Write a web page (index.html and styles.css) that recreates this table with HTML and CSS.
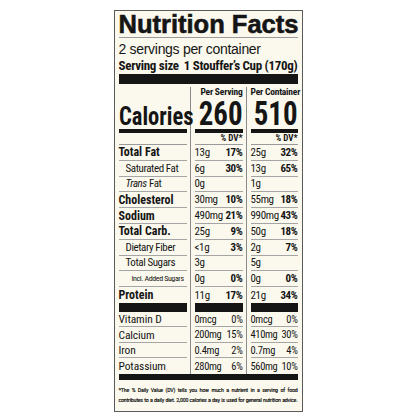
FILE: index.html
```html
<!DOCTYPE html>
<html lang="en">
<head>
<meta charset="utf-8">
<title>Nutrition Facts</title>
<link rel="stylesheet" href="styles.css">
</head>
<body>
<div class="label">
  <h1 class="title">Nutrition Facts</h1>
  <p class="servings">2 servings per container</p>
  <p class="size"><span>Serving size</span><span>1 Stouffer’s Cup (170g)</span></p>
  <div class="bar bar-top"></div>
  <div class="table">
    <div class="col col-labels">
      <div class="head"></div>
      <div class="cal"><span class="cal-label">Calories</span></div>
      <div class="dv"></div>
      <div class="row b">Total Fat</div>
      <div class="row ind">Saturated Fat</div>
      <div class="row ind"><span><i>Trans</i> Fat</span></div>
      <div class="row b">Cholesterol</div>
      <div class="row b">Sodium</div>
      <div class="row b">Total Carb.</div>
      <div class="row ind">Dietary Fiber</div>
      <div class="row ind">Total Sugars</div>
      <div class="row ind2">Incl. Added Sugars</div>
      <div class="row b last">Protein</div>
      <div class="seg"></div>
      <div class="vrow">Vitamin D</div>
      <div class="vrow">Calcium</div>
      <div class="vrow">Iron</div>
      <div class="vrow last">Potassium</div>
    </div>
    <div class="col col-a">
      <div class="head">Per Serving</div>
      <div class="cal"><span class="cal-num">260</span></div>
      <div class="dv">% DV*</div>
      <div class="row"><span>13g</span><b>17%</b></div>
      <div class="row"><span>6g</span><b>30%</b></div>
      <div class="row"><span>0g</span></div>
      <div class="row"><span>30mg</span><b>10%</b></div>
      <div class="row"><span>490mg</span><b>21%</b></div>
      <div class="row"><span>25g</span><b>9%</b></div>
      <div class="row"><span>&lt;1g</span><b>3%</b></div>
      <div class="row"><span>3g</span></div>
      <div class="row"><span>0g</span><b>0%</b></div>
      <div class="row last"><span>11g</span><b>17%</b></div>
      <div class="seg"></div>
      <div class="vrow"><span>0mcg</span><span>0%</span></div>
      <div class="vrow"><span>200mg</span><span>15%</span></div>
      <div class="vrow"><span>0.4mg</span><span>2%</span></div>
      <div class="vrow last"><span>280mg</span><span>6%</span></div>
    </div>
    <div class="col col-b">
      <div class="head">Per Container</div>
      <div class="cal"><span class="cal-num">510</span></div>
      <div class="dv">% DV*</div>
      <div class="row"><span>25g</span><b>32%</b></div>
      <div class="row"><span>13g</span><b>65%</b></div>
      <div class="row"><span>1g</span></div>
      <div class="row"><span>55mg</span><b>18%</b></div>
      <div class="row"><span>990mg</span><b>43%</b></div>
      <div class="row"><span>50g</span><b>18%</b></div>
      <div class="row"><span>2g</span><b>7%</b></div>
      <div class="row"><span>5g</span></div>
      <div class="row"><span>0g</span><b>0%</b></div>
      <div class="row last"><span>21g</span><b>34%</b></div>
      <div class="seg"></div>
      <div class="vrow"><span>0mcg</span><span>0%</span></div>
      <div class="vrow"><span>410mg</span><span>30%</span></div>
      <div class="vrow"><span>0.7mg</span><span>4%</span></div>
      <div class="vrow last"><span>560mg</span><span>10%</span></div>
    </div>
  </div>
  <div class="bar bar-bottom"></div>
  <div class="foot">
    <span class="foot-line">*The % Daily Value (DV) tells you how much a nutrient in a serving of food</span>
    <span class="foot-line">contributes to a daily diet. 2,000 calories a day is used for general nutrition advice.</span>
  </div>
</div>
</body>
</html>
```
FILE: styles.css
```css
html, body {
  margin: 0;
  padding: 0;
  background: #ffffff;
}

.label {
  box-sizing: border-box;
  width: 189px;
  height: 402px;
  margin: 10px auto 0;
  padding: 0 4px;
  border: 1px solid #5a5a5a;
  background: #fbf9ee;
  color: #151515;
  font-family: "Roboto Condensed", "Liberation Sans Narrow", "DejaVu Sans Condensed", sans-serif;
  font-stretch: condensed;
  display: flex;
  flex-direction: column;
}

.title {
  margin: 0;
  height: 26px;
  font-family: "Liberation Sans", Arial, sans-serif;
  font-stretch: normal;
  font-weight: 700;
  font-size: 25.5px;
  line-height: 26px;
  -webkit-text-stroke: 0.6px #151515;
  border-bottom: 1px solid #9a9a9a;
  white-space: nowrap;
}

.servings {
  margin: 3px 0 0;
  font-family: "Liberation Sans", Arial, sans-serif;
  font-stretch: normal;
  font-size: 14px;
  line-height: 16px;
  letter-spacing: -0.3px;
  white-space: nowrap;
}

.size {
  margin: 0;
  height: 17px;
  font-weight: 700;
  font-size: 13px;
  line-height: 17px;
  letter-spacing: -0.3px;
  display: flex;
  gap: 5px;
  white-space: nowrap;
}

.bar {
  background: #151515;
  flex: none;
}

.bar-top {
  height: 10px;
}

.bar-bottom {
  height: 6px;
}

.table {
  display: flex;
  margin-top: 3px;
}

.col {
  display: flex;
  flex-direction: column;
}

.col-labels {
  width: 68px;
}

.col-a,
.col-b {
  margin-left: 3px;
  padding-left: 4px;
  border-left: 1px solid #8a8a8a;
}

.col-a {
  width: 48px;
}

.col-b {
  width: 47px;
}

.head {
  height: 10px;
  font-weight: 700;
  font-size: 9.5px;
  line-height: 10px;
  letter-spacing: -0.2px;
  text-align: right;
  white-space: nowrap;
}

.cal {
  box-sizing: border-box;
  height: 36px;
  border-bottom: 4px solid #151515;
  display: flex;
  align-items: flex-end;
  justify-content: flex-start;
  font-weight: 700;
}

.col-a .cal,
.col-b .cal {
  justify-content: flex-end;
}

.cal-label {
  display: inline-block;
  font-size: 25px;
  line-height: 25px;
  white-space: nowrap;
  transform: scaleX(0.9);
  transform-origin: left bottom;
}

.cal-num {
  display: inline-block;
  font-size: 34px;
  line-height: 32px;
  transform: scaleX(0.85);
  transform-origin: right bottom;
}

.dv {
  box-sizing: border-box;
  height: 12px;
  border-bottom: 1px solid #9a9a9a;
  font-weight: 700;
  font-size: 9px;
  line-height: 11px;
  text-align: right;
}

.row,
.vrow {
  box-sizing: border-box;
  border-bottom: 1px solid #a5a5a5;
  display: flex;
  align-items: center;
  justify-content: space-between;
  white-space: nowrap;
}

.row {
  height: 15.8px;
  font-size: 11px;
  letter-spacing: -0.35px;
}

.vrow {
  height: 15.5px;
  font-size: 10.5px;
  letter-spacing: -0.35px;
}

.col-labels .row,
.col-labels .vrow {
  justify-content: flex-start;
}

.col-labels .row {
  font-size: 12px;
  letter-spacing: 0;
}

.col-labels .vrow {
  font-size: 11.5px;
  letter-spacing: -0.1px;
}

.row.last,
.vrow.last {
  border-bottom: 0;
}

.row b {
  font-weight: 700;
}

.b {
  font-weight: 700;
}

.col-labels .ind {
  padding-left: 7px;
  font-size: 11px;
  letter-spacing: -0.4px;
}

.col-labels .ind2 {
  padding-left: 13px;
  font-size: 8px;
  letter-spacing: -0.4px;
}

.seg {
  height: 9px;
  background: #151515;
  flex: none;
}

.foot {
  padding-top: 5px;
  font-size: 6.1px;
  line-height: 10px;
  color: #111111;
  -webkit-text-stroke: 0.15px #111111;
}

.foot-line {
  display: block;
  white-space: nowrap;
  text-align: justify;
  text-align-last: justify;
  letter-spacing: -0.27px;
}
```
